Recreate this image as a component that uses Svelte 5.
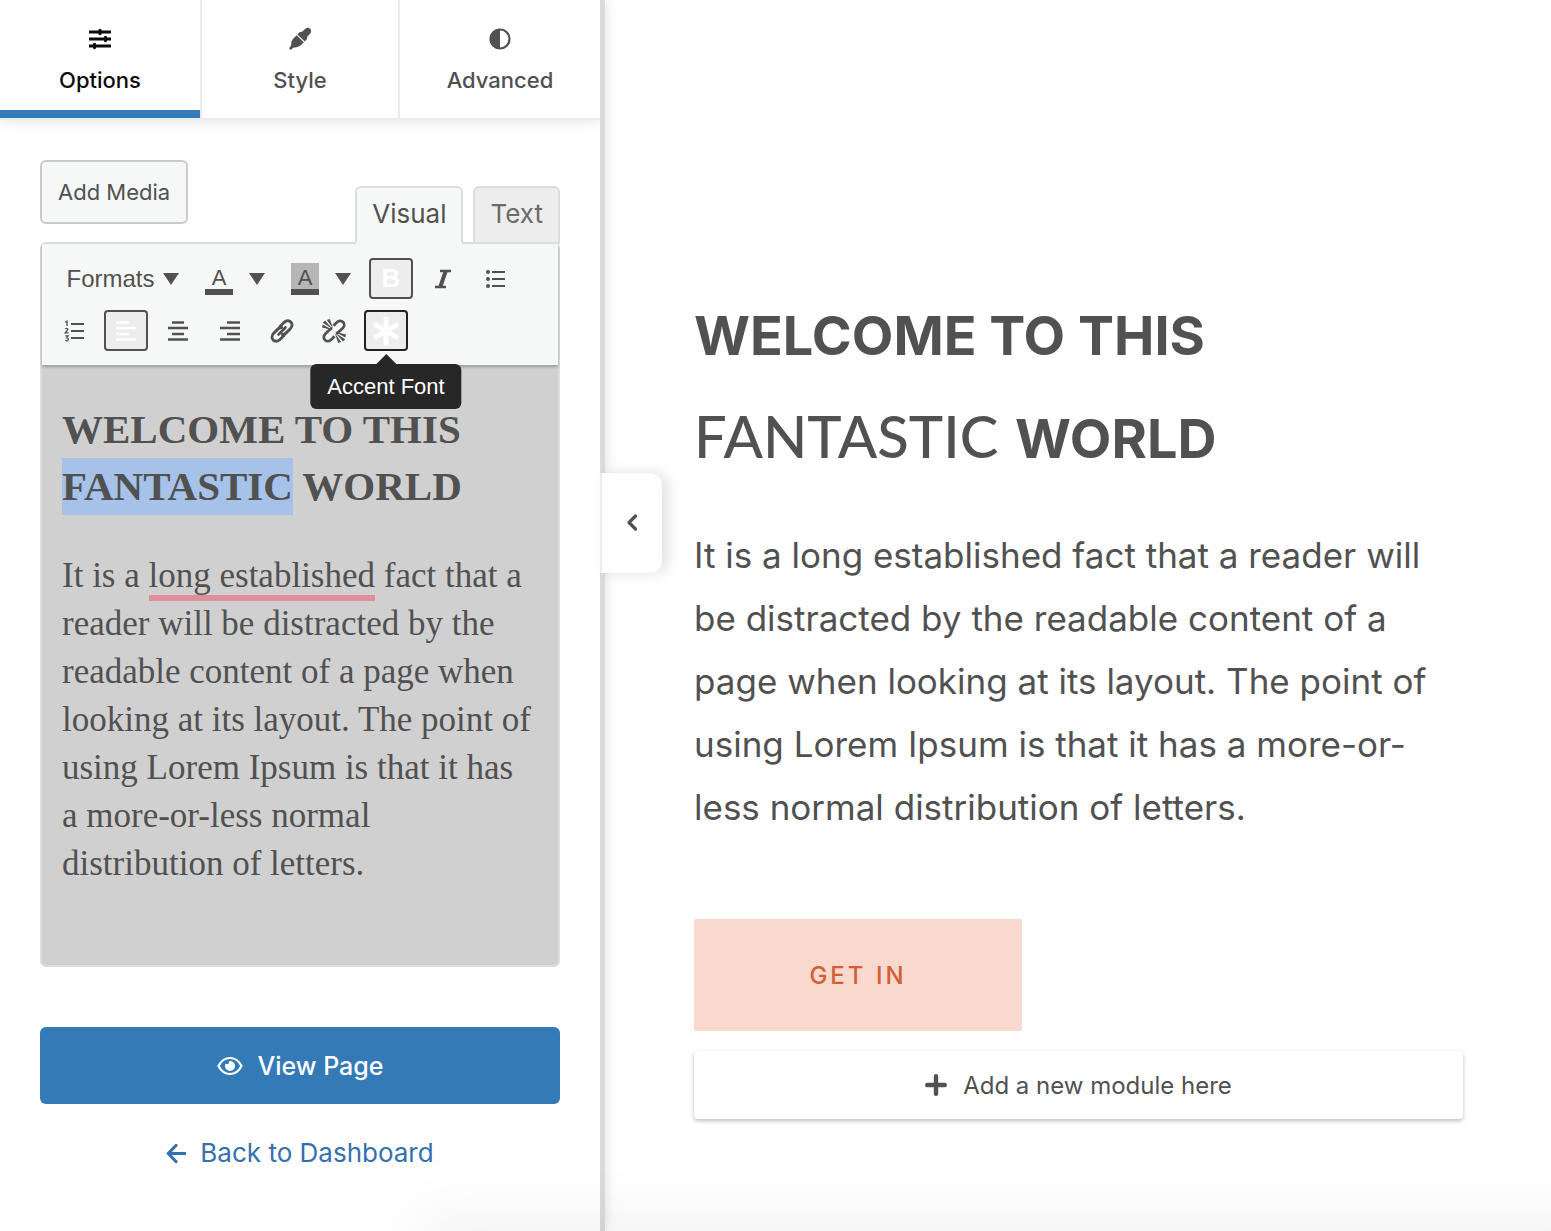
<script>
  let activeTab = $state('Options');
  let editorMode = $state('Visual');
</script>

<div class="app">
  <aside class="sidebar">
    <nav class="tabs">
      <button class="tab" class:active={activeTab === 'Options'} onclick={() => (activeTab = 'Options')}>
        <svg width="24" height="24" viewBox="0 0 24 24" aria-hidden="true">
          <path d="M1 5h22M1 12h22M1 19h22" stroke="currentColor" stroke-width="2.800" />
          <path d="M12 3.400v3.200M17.500 10.400v3.200M6.500 17.400v3.200" stroke="currentColor" stroke-width="3.200" stroke-linecap="round" />
        </svg>
        <span>Options</span>
      </button>
      <button class="tab" class:active={activeTab === 'Style'} onclick={() => (activeTab = 'Style')}>
        <svg width="24" height="24" viewBox="0 0 24 24" fill="currentColor" aria-hidden="true">
          <path d="M11.500 5.200 14.400 4.600 17 2c2-1.900 4.300-1.400 5.300-.2 1.100 1.200 1.300 3.300-.4 5.100L19.400 9.500l-.6 2.700-2 2.400L9.400 7.400z" />
          <path d="M8.700 8.300l7.100 7-2.800 2.700c-2.400 2.200-5 2.500-7.900 2.800L2.800 23 1 21.200l2-2.400c.2-3.200.6-5.700 2.600-7.500z" />
        </svg>
        <span>Style</span>
      </button>
      <button class="tab" class:active={activeTab === 'Advanced'} onclick={() => (activeTab = 'Advanced')}>
        <svg width="24" height="24" viewBox="0 0 24 24" aria-hidden="true">
          <circle cx="12" cy="12" r="9.500" fill="none" stroke="currentColor" stroke-width="2.200" />
          <path d="M12 2a10 10 0 0 0 0 20z" fill="currentColor" />
        </svg>
        <span>Advanced</span>
      </button>
    </nav>

    <div class="panel">
      <div class="editor-head">
        <button class="add-media">Add Media</button>
        <div class="modes">
          <button class="mode" class:current={editorMode === 'Visual'} onclick={() => (editorMode = 'Visual')}>Visual</button>
          <button class="mode" class:current={editorMode === 'Text'} onclick={() => (editorMode = 'Text')}>Text</button>
        </div>
      </div>

      <div class="editor">
        <div class="toolbar">
          <div class="tool-row">
            <button class="formats">Formats <span class="caret"></span></button>
            <div class="split">
              <button class="tool" aria-label="Text color"><span class="swatch">A</span></button>
              <button class="drop" aria-label="Text color choices"><span class="caret"></span></button>
            </div>
            <div class="split">
              <button class="tool" aria-label="Background color"><span class="swatch filled">A</span></button>
              <button class="drop" aria-label="Background color choices"><span class="caret"></span></button>
            </div>
            <button class="tool on" aria-label="Bold"><b>B</b></button>
            <button class="tool" aria-label="Italic">
              <svg width="20" height="24" viewBox="0 0 20 24" aria-hidden="true">
                <path d="M7 4h11M2 20h11" stroke="currentColor" stroke-width="2.600" />
                <path d="M12.700 4 7.300 20" stroke="currentColor" stroke-width="4" />
              </svg>
            </button>
            <button class="tool" aria-label="Bulleted list">
              <svg width="20" height="20" viewBox="0 0 20 20" aria-hidden="true">
                <path d="M7 3h13M7 10h13M7 17h13" stroke="currentColor" stroke-width="1.800" />
                <g fill="currentColor"><circle cx="3" cy="3" r="2" /><circle cx="3" cy="10" r="2" /><circle cx="3" cy="17" r="2" /></g>
              </svg>
            </button>
          </div>
          <div class="tool-row">
            <button class="tool" aria-label="Numbered list">
              <svg width="20" height="22" viewBox="0 0 20 22" aria-hidden="true">
                <path d="M7 4h13M7 11h13M7 18h13" stroke="currentColor" stroke-width="1.800" />
                <path d="M1.300 2.200 3 1.200V6M1.300 9c1.500-1.300 3.200-.2 2.200 1.200L1.300 12.800h3.200M1.300 15.800h2.900L2.700 17.900c2.300-.1 2.100 3.100-.1 2.900L1.200 20.400" fill="none" stroke="currentColor" stroke-width="1.300" />
              </svg>
            </button>
            <button class="tool on" aria-label="Align left">
              <svg width="20" height="20" viewBox="0 0 20 20" aria-hidden="true"><path d="M0 1.500h13M0 7h20M0 13h13M0 18.500h20" stroke="currentColor" stroke-width="2.600" /></svg>
            </button>
            <button class="tool" aria-label="Align center">
              <svg width="20" height="20" viewBox="0 0 20 20" aria-hidden="true"><path d="M4 1.500h12M0 7h20M4 13h12M0 18.500h20" stroke="currentColor" stroke-width="2.600" /></svg>
            </button>
            <button class="tool" aria-label="Align right">
              <svg width="20" height="20" viewBox="0 0 20 20" aria-hidden="true"><path d="M7 1.500h13M0 7h20M7 13h13M0 18.500h20" stroke="currentColor" stroke-width="2.600" /></svg>
            </button>
            <button class="tool" aria-label="Insert link">
              <svg width="26" height="26" viewBox="0 0 26 26" fill="none" stroke="currentColor" stroke-width="2.900" stroke-linecap="round" aria-hidden="true">
                <path d="M9.500 16.500 16.500 9.500" stroke-width="2.600" />
                <path d="M11 8.500 15 4.500c2.400-2.400 5.400-2 6.800-.5s1.900 4.300-.5 6.700l-4.400 4.400c-1 1-2.300 1.500-3.600 1.400" />
                <path d="M15 17.500 11 21.500c-2.400 2.400-5.400 2-6.800.5s-1.900-4.300.5-6.700l4.400-4.400c1-1 2.300-1.500 3.600-1.400" />
              </svg>
            </button>
            <button class="tool" aria-label="Remove link">
              <svg width="26" height="26" viewBox="0 0 26 26" fill="none" stroke="currentColor" aria-hidden="true">
                <path d="M12.500 7.800 15.700 4.400c2.400-2.400 5-1.700 6.300-.4s2 3.900-.4 6.300L17.700 14c-.8.800-1.700 1.200-2.700 1.300" stroke-width="2.800" />
                <path d="M13.500 18.200 10.300 21.600C7.900 24 5.300 23.300 4 22s-2-3.900.4-6.300L8.300 12c.8-.8 1.700-1.200 2.700-1.300" stroke-width="2.800" />
                <path d="M12.200 12.200 1 9.600l.7-3zM11.800 11.200 1.800 4.800l2.200-2.400zM12.200 10.800 5.800 2l3-1.100zM13.800 13.800 25 16.400l-.7 3zM14.200 14.800l10 6.400-2.200 2.400zM13.800 15.200 20.200 24l-3 1.100z" fill="currentColor" stroke="none" />
              </svg>
            </button>
            <button class="tool on focused" aria-label="Accent Font" aria-describedby="accent-tip">
              <svg width="28" height="28" viewBox="0 0 28 28" aria-hidden="true">
                <path d="M14 0v28M1.900 7l24.200 14M1.900 21 26.100 7" stroke="currentColor" stroke-width="4.800" />
              </svg>
              <span class="tooltip" id="accent-tip" role="tooltip">Accent Font</span>
            </button>
          </div>
        </div>

        <div class="document">
          <h2>WELCOME TO THIS<br /><mark>FANTASTIC</mark> WORLD</h2>
          <p>
            It is a <span class="flagged">long established</span> fact that a<br />
            reader will be distracted by the<br />
            readable content of a page when<br />
            looking at its layout. The point of<br />
            using Lorem Ipsum is that it has<br />
            a more-or-less normal<br />
            distribution of letters.
          </p>
        </div>
      </div>

      <button class="view">
        <svg width="26" height="20" viewBox="0 0 26 20" aria-hidden="true">
          <path d="M1.500 10C4 5 8 2 13 2s9 3 11.500 8C22 15 18 18 13 18S4 15 1.500 10z" fill="none" stroke="currentColor" stroke-width="2.200" />
          <path d="M13 5a5 5 0 1 1-5 5c0-.8.200-1.500.5-2.200 1.600 1.100 3.900.2 3.500-2.600z" fill="currentColor" />
        </svg>
        <span>View Page</span>
      </button>
      <a class="back" href="#dashboard">
        <svg width="20" height="22" viewBox="0 0 20 22" fill="none" stroke="currentColor" stroke-width="3.200" aria-hidden="true">
          <path d="M2.500 11.500H19M10 3.500 2.200 11.500l7.800 8" stroke-linecap="round" stroke-linejoin="round" />
        </svg>
        <span>Back to Dashboard</span>
      </a>
    </div>

    <button class="collapse" aria-label="Collapse sidebar">
      <svg width="14" height="20" viewBox="0 0 14 20" fill="none" stroke="currentColor" stroke-width="3.200" aria-hidden="true">
        <path d="M10.500 3 4 9.500l6.500 6.500" stroke-linecap="round" stroke-linejoin="round" />
      </svg>
    </button>
  </aside>

  <main class="preview">
    <h1>WELCOME TO THIS<br /><span class="accent">FANTASTIC</span> WORLD</h1>
    <p>
      It is a long established fact that a reader will<br />
      be distracted by the readable content of a<br />
      page when looking at its layout. The point of<br />
      using Lorem Ipsum is that it has a more-or-<br />
      less normal distribution of letters.
    </p>
    <a class="cta" href="#get-in">GET IN</a>
    <button class="add-module">
      <svg width="22" height="22" viewBox="0 0 22 22" aria-hidden="true">
        <path d="M11 2.200v17.600M2.200 11h17.600" stroke="currentColor" stroke-width="4.400" stroke-linecap="round" />
      </svg>
      <span>Add a new module here</span>
    </button>
  </main>
  <div class="haze"></div>
</div>

<style>
  :global(body) {
    background: #fff;
  }

  .app {
    position: relative;
    display: grid;
    grid-template-columns: 600px minmax(0, 1fr);
    min-height: 100vh;
    overflow: hidden;
    color: #515151;
    font-family: Inter, sans-serif;
  }

  button {
    margin: 0;
    padding: 0;
    border: 0;
    background: none;
    color: inherit;
    font: inherit;
    cursor: pointer;
  }

  svg {
    display: block;
    flex: none;
  }

  .sidebar {
    position: relative;
    z-index: 1;
    background: #fff;
    box-shadow: 0 0 0 5px #dadbdb, 4px 0 14px rgba(0, 0, 0, 0.15);
  }

  .tabs {
    display: grid;
    grid-template-columns: repeat(3, 1fr);
    box-shadow: 0 2px 0 #ebebeb, 0 4px 12px rgba(0, 0, 0, 0.1);
    clip-path: inset(0 0 -20px 0);
  }

  .tab {
    display: flex;
    flex-direction: column;
    align-items: center;
    gap: 15px;
    height: 118px;
    box-sizing: border-box;
    padding: 27px 0 0;
    font-size: 22px;
    line-height: 28px;
    font-weight: 500;
  }

  .tab:nth-child(2) {
    border-left: 2px solid #ebebeb;
    border-right: 2px solid #ebebeb;
  }

  .tab.active {
    color: #0b0b0b;
    border-bottom: 8px solid #337ab7;
  }

  .panel {
    display: flex;
    flex-direction: column;
    padding: 42px 40px 60px;
  }

  .editor-head {
    display: flex;
    justify-content: space-between;
    align-items: flex-start;
    height: 82px;
  }

  .add-media {
    height: 64px;
    padding: 0 16px;
    border: 2px solid #c9caca;
    border-radius: 6px;
    background: #f6f8f7;
    font-size: 22px;
  }

  .modes {
    display: flex;
    align-items: flex-end;
    gap: 10px;
    height: 84px;
    position: relative;
    z-index: 1;
  }

  .mode {
    height: 58px;
    box-sizing: border-box;
    padding: 0 15px 4px;
    border: 2px solid #dcdddd;
    border-radius: 6px 6px 0 0;
    background: #ededed;
    color: #6b6b6b;
    font-size: 26px;
  }

  .mode.current {
    border-bottom-color: #f6f8f7;
    background: #f6f8f7;
    color: #515151;
  }

  .editor {
    border: 2px solid #dcdddd;
    border-radius: 6px;
    background: #d0d0d0;
  }

  .toolbar {
    display: flex;
    flex-direction: column;
    gap: 11px;
    padding: 14px 10px;
    background: #f6f8f7;
    box-shadow: 0 2px 3px rgba(0, 0, 0, 0.26);
  }

  .tool-row {
    display: flex;
    gap: 8px;
  }

  .formats,
  .tool,
  .drop {
    display: flex;
    align-items: center;
    justify-content: center;
    height: 41px;
    box-sizing: border-box;
    font-family: "Liberation Sans", sans-serif;
  }

  .formats {
    gap: 8px;
    width: 137px;
    padding-left: 4px;
    font-size: 24px;
  }

  .split {
    display: flex;
  }

  .tool {
    position: relative;
    width: 44px;
  }

  .drop {
    width: 34px;
    padding-right: 2px;
  }

  .tool.on {
    border: 2px solid #515151;
    border-radius: 4px;
    background: #ededed;
    color: #fff;
    font-size: 26px;
  }

  .tool.focused {
    border-color: #222;
  }

  .caret {
    border: 8px solid transparent;
    border-top: 12px solid #515151;
    border-bottom: 0;
  }

  .swatch {
    width: 28px;
    height: 32px;
    box-sizing: border-box;
    border-bottom: 6px solid #515151;
    font-size: 22px;
    line-height: 30px;
  }

  .swatch.filled {
    background: #b6b6b6;
  }

  .tooltip {
    position: absolute;
    top: 52px;
    left: 50%;
    z-index: 2;
    padding: 0 17px;
    border-radius: 6px;
    background: #272727;
    color: #fff;
    font-size: 22px;
    line-height: 45px;
    white-space: nowrap;
    transform: translateX(-50%);
  }

  .tooltip::before {
    content: "";
    position: absolute;
    bottom: 100%;
    left: 50%;
    margin-left: -10px;
    border: 10px solid transparent;
    border-top: 0;
    border-bottom-color: #272727;
  }

  .document {
    padding: 36px 20px 77px;
    font-family: "Liberation Serif", serif;
    white-space: nowrap;
  }

  .document h2 {
    margin: 0 0 37px;
    font-size: 41px;
    line-height: 57px;
    font-weight: 700;
  }

  .document p {
    margin: 0;
    font-size: 35px;
    line-height: 48px;
  }

  mark {
    display: inline-block;
    background: #a6c2e8;
    color: inherit;
  }

  .flagged {
    border-bottom: 6px solid #df8f9a;
  }

  .view {
    display: flex;
    align-items: center;
    justify-content: center;
    gap: 15px;
    height: 77px;
    margin-top: 60px;
    border-radius: 6px;
    background: #337ab7;
    color: #fff;
    font-size: 25px;
    font-weight: 500;
  }

  .back {
    display: flex;
    align-items: center;
    justify-content: center;
    gap: 14px;
    margin-top: 33px;
    color: #3470ad;
    font-size: 26px;
    line-height: 32px;
    text-decoration: none;
  }

  .collapse {
    position: absolute;
    top: 473px;
    left: 100%;
    display: flex;
    align-items: center;
    justify-content: center;
    width: 62px;
    height: 100px;
    border-radius: 0 12px 12px 0;
    border-left: 2px solid #ededed;
    box-sizing: border-box;
    background: #fff;
    box-shadow: 6px 0 14px rgba(0, 0, 0, 0.12);
  }

  .preview {
    padding: 284px 88px 60px 94px;
  }

  .preview h1 {
    margin: 0 0 34px;
    font-size: 54px;
    line-height: 103px;
    font-weight: 700;
    white-space: nowrap;
  }

  .accent {
    margin-right: 4px;
    font-family: Lato, sans-serif;
    font-size: 58px;
    line-height: 58px;
    font-weight: 500;
  }

  .preview p {
    margin: 0 0 80px;
    font-size: 35px;
    line-height: 63px;
    white-space: nowrap;
  }

  .cta {
    display: flex;
    align-items: center;
    justify-content: center;
    width: 328px;
    height: 112px;
    border-radius: 2px;
    background: #f9d9cd;
    color: #d25f35;
    font-size: 24px;
    font-weight: 500;
    letter-spacing: 3px;
    text-decoration: none;
  }

  .add-module {
    display: flex;
    align-items: center;
    justify-content: center;
    gap: 16px;
    width: 100%;
    height: 68px;
    margin-top: 20px;
    border-radius: 4px;
    background: #fff;
    box-shadow: 0 2px 4px rgba(0, 0, 0, 0.26);
    font-size: 24px;
  }

  .haze {
    position: absolute;
    z-index: 2;
    right: -60px;
    bottom: -20px;
    left: 420px;
    height: 20px;
    box-shadow: 0 0 60px rgba(60, 80, 70, 0.18);
    pointer-events: none;
  }
</style>
